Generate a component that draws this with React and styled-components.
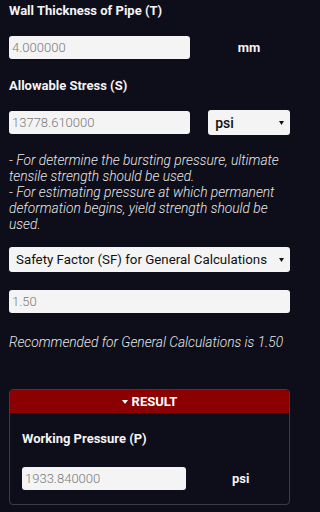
import React from "react";
import styled, { createGlobalStyle } from "styled-components";

const Global = createGlobalStyle`
  html, body {
    margin: 0;
    padding: 0;
    background: #0e0d1a;
  }
  body {
    font-family: Roboto, "Liberation Sans", Arial, sans-serif;
    color: #f2f2f2;
  }
  * { box-sizing: border-box; }
`;

const Page = styled.div`
  width: 299px;
  padding: 3px 9px 9px;
  min-height: 512px;
  background: #0e0d1a;
`;

const Label = styled.div`
  font-size: 13px;
  line-height: 15px;
  font-weight: 700;
  color: #f4f4f4;
  margin-bottom: ${(p) => p.$mb ?? 18}px;
`;

const Row = styled.div`
  display: grid;
  grid-template-columns: 64.5% 1fr;
  column-gap: 18px;
  align-items: center;
  margin-bottom: ${(p) => p.$mb ?? 19}px;
`;

const TextInput = styled.input`
  display: block;
  width: 100%;
  height: 23px;
  border: none;
  border-radius: 3px;
  background: #f4f4f4;
  padding: 0 3px;
  font-family: Roboto, "Liberation Sans", Arial, sans-serif;
  font-size: 13px;
  font-weight: 300;
  color: #7a7a7a;
  outline: none;
  margin-bottom: ${(p) => p.$mb ?? 0}px;
`;

const Unit = styled.div`
  text-align: center;
  font-size: 13px;
  font-weight: 700;
  color: #f4f4f4;
`;

const SelectWrap = styled.div`
  position: relative;
  margin-bottom: ${(p) => p.$mb ?? 0}px;
`;

const Select = styled.select`
  appearance: none;
  -webkit-appearance: none;
  display: block;
  width: 100%;
  height: 25px;
  border: none;
  border-radius: 3px;
  background: #f4f4f4;
  padding: 0 12px 0 7px;
  font-family: Roboto, "Liberation Sans", Arial, sans-serif;
  font-size: ${(p) => p.$size ?? 13.3}px;
  font-weight: ${(p) => p.$weight ?? 400};
  color: #111;
  outline: none;
`;

const Arrow = styled.svg`
  position: absolute;
  right: 6px;
  top: 50%;
  margin-top: -2px;
  width: 5px;
  height: 4px;
  pointer-events: none;
`;

const Note = styled.div`
  font-size: 13.75px;
  line-height: 16px;
  font-style: italic;
  font-weight: 300;
  color: #e8e8e8;
  margin-top: ${(p) => p.$mt ?? 0}px;
  margin-bottom: ${(p) => p.$mb ?? 15}px;
`;

const ResultBox = styled.div`
  border: 1px solid #3c3b47;
  border-radius: 4px;
  overflow: hidden;
`;

const ResultHeader = styled.div`
  height: 23px;
  background: #8b0000;
  display: flex;
  align-items: center;
  justify-content: center;
  gap: 4px;
  font-size: 13px;
  font-weight: 700;
  color: #fff;
`;

const ResultBody = styled.div`
  padding: 18px 12px 14px;
`;

const Caret = () => (
  <svg width="6" height="4" viewBox="0 0 6 4">
    <path d="M0 0 L6 0 L3 4 Z" fill="#fff" />
  </svg>
);

const SelectBox = ({ value, options, mb, weight, size }) => (
  <SelectWrap $mb={mb}>
    <Select defaultValue={value} $weight={weight} $size={size}>
      {options.map((o) => (
        <option key={o}>{o}</option>
      ))}
    </Select>
    <Arrow viewBox="0 0 5 4">
      <path d="M0 0 L5 0 L2.5 4 Z" fill="#111" />
    </Arrow>
  </SelectWrap>
);

export default function App() {
  return (
    <>
      <Global />
      <Page>
        <Label>Wall Thickness of Pipe (T)</Label>
        <Row>
          <TextInput defaultValue="4.000000" />
          <Unit>mm</Unit>
        </Row>

        <Label $mb={17}>Allowable Stress (S)</Label>
        <Row $mb={17}>
          <TextInput defaultValue="13778.610000" />
          <SelectBox value="psi" options={["psi", "MPa", "ksi"]} weight={500} size={14} />
        </Row>

        <Note>
          - For determine the bursting pressure, ultimate tensile strength should be used.
          <br />- For estimating pressure at which permanent deformation begins, yield strength should be used.
        </Note>

        <SelectBox
          value="Safety Factor (SF) for General Calculations"
          options={["Safety Factor (SF) for General Calculations"]}
          mb={18}
        />

        <TextInput defaultValue="1.50" />

        <Note $mt={21} $mb={39}>Recommended for General Calculations is 1.50</Note>

        <ResultBox>
          <ResultHeader>
            <Caret />
            RESULT
          </ResultHeader>
          <ResultBody>
            <Label $mb={21}>Working Pressure (P)</Label>
            <Row $mb={0}>
              <TextInput defaultValue="1933.840000" />
              <Unit>psi</Unit>
            </Row>
          </ResultBody>
        </ResultBox>
      </Page>
    </>
  );
}
